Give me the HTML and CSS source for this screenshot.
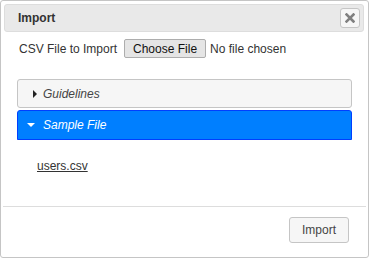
FILE: index.html
```html
<!DOCTYPE html>
<html lang="en">
<head>
    <meta charset="UTF-8">
    <meta name="viewport" content="width=device-width, initial-scale=1.0">
    <title>Import</title>
    <link rel="stylesheet" href="styles.css">
</head>
<body>
    <div class="dialog">
        <div class="titlebar">
            <span class="title">Import</span>
            <button class="close-btn" title="Close">
                <svg width="10" height="10" viewBox="0 0 10 10">
                    <path d="M1.5 1.5 L8.5 8.5 M8.5 1.5 L1.5 8.5" stroke="#808080" stroke-width="2.6" stroke-linecap="square"/>
                </svg>
            </button>
        </div>

        <div class="dialog-content">
            <div class="file-row">
                <label for="csvFile">CSV File to Import</label>
                <input type="file" id="csvFile" class="file-input">
            </div>

            <div class="accordion">
                <div class="acc-header">
                    <svg class="acc-icon" width="8" height="8" viewBox="0 0 8 8">
                        <path d="M2 0 L6 4 L2 8 Z" fill="#222"/>
                    </svg>
                    <span>Guidelines</span>
                </div>
                <div class="acc-header active">
                    <svg class="acc-icon" width="8" height="8" viewBox="0 0 8 8">
                        <path d="M0 2 L8 2 L4 6 Z" fill="#fff"/>
                    </svg>
                    <span>Sample File</span>
                </div>
                <div class="acc-panel">
                    <a href="#" class="sample-link">users.csv</a>
                </div>
            </div>
        </div>

        <div class="buttonpane">
            <button class="btn">Import</button>
        </div>
    </div>
</body>
</html>
```

FILE: styles.css
```css
html, body {
    margin: 0;
    padding: 0;
    background: #fff;
}

body {
    font-family: "Liberation Sans", Arial, sans-serif;
    font-size: 12px;
    color: #333;
}

.dialog {
    box-sizing: border-box;
    width: 369px;
    height: 258px;
    padding: 3px;
    border: 1px solid #c5c5c5;
    border-radius: 3px;
    background: #fff;
    display: flex;
    flex-direction: column;
}

.titlebar {
    box-sizing: border-box;
    height: 28px;
    margin: 0 1px 0 0;
    padding: 0 3px 0 13px;
    border: 1px solid #dddddd;
    border-radius: 3px;
    background: #e9e9e9;
    display: flex;
    align-items: center;
    justify-content: space-between;
}

.title {
    font-weight: bold;
    color: #333;
}

.close-btn {
    box-sizing: border-box;
    width: 20px;
    height: 20px;
    padding: 0;
    border: 1px solid #c5c5c5;
    border-radius: 3px;
    background: #f6f6f6;
    display: flex;
    align-items: center;
    justify-content: center;
}

.dialog-content {
    box-sizing: border-box;
    height: 174px;
    padding: 7px 13px 0 13px;
}

.file-row {
    display: flex;
    align-items: center;
    height: 19px;
    padding-left: 2px;
}

.file-row label {
    margin-right: 7px;
}

.file-input {
    font-family: "Liberation Sans", Arial, sans-serif;
    font-size: 12px;
    color: #333;
}

.file-input::file-selector-button {
    font-family: "Liberation Sans", Arial, sans-serif;
    font-size: 12px;
    height: 19px;
    padding: 0 8px;
    margin-right: 4px;
    border: 1px solid #adadad;
    border-radius: 2px;
    background: #e5e5e5;
    color: #111;
}

.accordion {
    margin-top: 21px;
}

.acc-header {
    box-sizing: border-box;
    height: 29px;
    padding-left: 13px;
    border: 1px solid #c5c5c5;
    border-radius: 3px;
    background: #f6f6f6;
    color: #454545;
    font-style: italic;
    display: flex;
    align-items: center;
}

.acc-header.active {
    height: 30px;
    margin-top: 2px;
    border-color: #003eff;
    border-radius: 3px 3px 0 0;
    background: #007fff;
    color: #fff;
}

.acc-icon {
    margin-right: 4px;
}

.acc-header.active .acc-icon {
    margin-left: -4px;
    margin-right: 8px;
}

.acc-panel {
    padding: 19px 20px 0;
}

.sample-link {
    color: #333;
    text-decoration: underline;
}

.buttonpane {
    flex: 1;
    margin: 0 -1px;
    padding: 10px 17px 0 0;
    border-top: 1px solid #dddddd;
    display: flex;
    justify-content: flex-end;
    align-items: flex-start;
}

.btn {
    box-sizing: border-box;
    width: 60px;
    height: 26px;
    padding: 0;
    border: 1px solid #c5c5c5;
    border-radius: 3px;
    background: #f6f6f6;
    color: #454545;
    font-family: "Liberation Sans", Arial, sans-serif;
    font-size: 12px;
}
```
